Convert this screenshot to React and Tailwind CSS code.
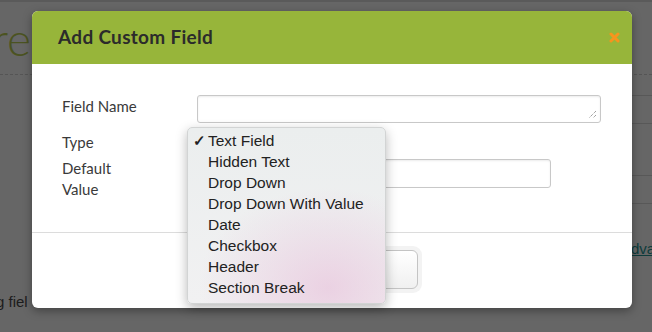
import React from 'react';

const TYPES = ['Text Field', 'Hidden Text', 'Drop Down', 'Drop Down With Value', 'Date', 'Checkbox', 'Header', 'Section Break'];

function TypeMenu() {
  return (
    <div
      className="absolute left-[187px] top-[127px] w-[199px] h-[177px] rounded-[5px] border border-[#d2d4d4] pt-[2px] shadow-[0_4px_12px_rgba(0,0,0,0.28)] bg-gradient-to-b from-[#ebeeee] to-[#f1f1f2] overflow-hidden font-['Liberation_Sans',Arial,sans-serif] text-[15.5px] text-[#222]"
    >
      <div className="absolute left-[10px] top-[60px] w-[260px] h-[200px] rounded-full bg-[radial-gradient(closest-side,rgba(232,196,220,0.7),rgba(240,240,241,0))]" />
      <ul className="relative">
        {TYPES.map((t, i) => (
          <li key={t} className="flex items-center h-[21px] leading-[21px]">
            <span className="w-[20px] pl-[5px] text-[15px] font-bold">{i === 0 ? '✓' : ''}</span>
            <span>{t}</span>
          </li>
        ))}
      </ul>
    </div>
  );
}

export default function App() {
  return (
    <div className="relative w-[652px] h-[332px] bg-[#666666] overflow-hidden font-['Lato',sans-serif]">
      {/* page behind the overlay */}
      <div className="h-[2px] bg-[#5a5a5a]" />
      <div className="pt-[14px] text-[46px] leading-[46px] font-light text-[#4b5321] -ml-[8px]">re</div>
      <div className="mt-[12px] border-t border-dashed border-[#555]" />
      <div className="absolute right-0 top-[95px] w-[20px] flex flex-col">
        <div className="h-[28px] border-t border-[#585858]" />
        <div className="h-[52px] border-t border-[#585858]" />
        <div className="h-[28px] border-t border-[#585858]" />
        <div className="border-t border-[#585858]" />
      </div>
      <div className="absolute left-[631px] top-[238px] text-[15px] text-[#0d3b3b] underline font-['Liberation_Sans',sans-serif]">dva</div>
      <div className="absolute left-[-4px] top-[291px] text-[15px] text-[#1c1c1c] font-['Liberation_Sans',sans-serif]">g fiel</div>

      {/* modal */}
      <div className="absolute left-[32px] top-[11px] w-[600px] h-[297px] rounded-[6px] bg-white overflow-hidden shadow-[0_3px_10px_rgba(0,0,0,0.35)] text-[#333]">
        <div className="h-[53px] bg-[#97b53a] flex items-center justify-between pl-[26px] pr-[12px]">
          <h2 className="text-[19px] font-bold text-[#2b2b2b] tracking-[0.3px]">Add Custom Field</h2>
          <svg width="11" height="11" viewBox="0 0 11 11" className="mt-[-1px]">
            <path d="M2 2 L9 9 M9 2 L2 9" stroke="#f7941d" strokeWidth="3" strokeLinecap="round" />
          </svg>
        </div>

        <div className="h-[168px] pl-[30px] pt-[31px] text-[15px] text-[#3a3a3a]">
          <div className="flex items-start h-[28px]">
            <label className="w-[135px] leading-[22px]">Field Name</label>
            <div className="relative w-[404px] h-[28px] rounded-[3px] border border-[#c8c8c8] shadow-[inset_0_1px_2px_rgba(0,0,0,0.08)]">
              <svg width="9" height="9" viewBox="0 0 9 9" className="absolute right-[3px] bottom-[3px]">
                <path d="M8 1 L1 8 M8 5 L5 8" stroke="#777" strokeWidth="1" strokeDasharray="1 1" />
              </svg>
            </div>
          </div>
          <div className="flex items-center h-[20px] mt-[9px]">
            <label className="w-[135px]">Type</label>
          </div>
          <div className="flex items-start mt-[6px]">
            <label className="w-[135px] leading-[21px]">Default<br />Value</label>
            <div className="mt-[1px] w-[354px] h-[29px] rounded-[3px] border border-[#c8c8c8] shadow-[inset_0_1px_2px_rgba(0,0,0,0.08)]" />
          </div>
        </div>

        <div className="border-t border-[#dcdcdc] flex justify-end pr-[210px] pt-[13px]">
          <div className="rounded-[9px] bg-[#f3f3f3] p-[4px]">
            <button className="w-[108px] h-[39px] rounded-[6px] border border-[#c4c4c4] bg-gradient-to-b from-white to-[#f0f0f0] text-[14px] text-[#333] font-['Liberation_Sans',sans-serif]">
              Cancel
            </button>
          </div>
        </div>
      </div>

      <TypeMenu />
    </div>
  );
}
